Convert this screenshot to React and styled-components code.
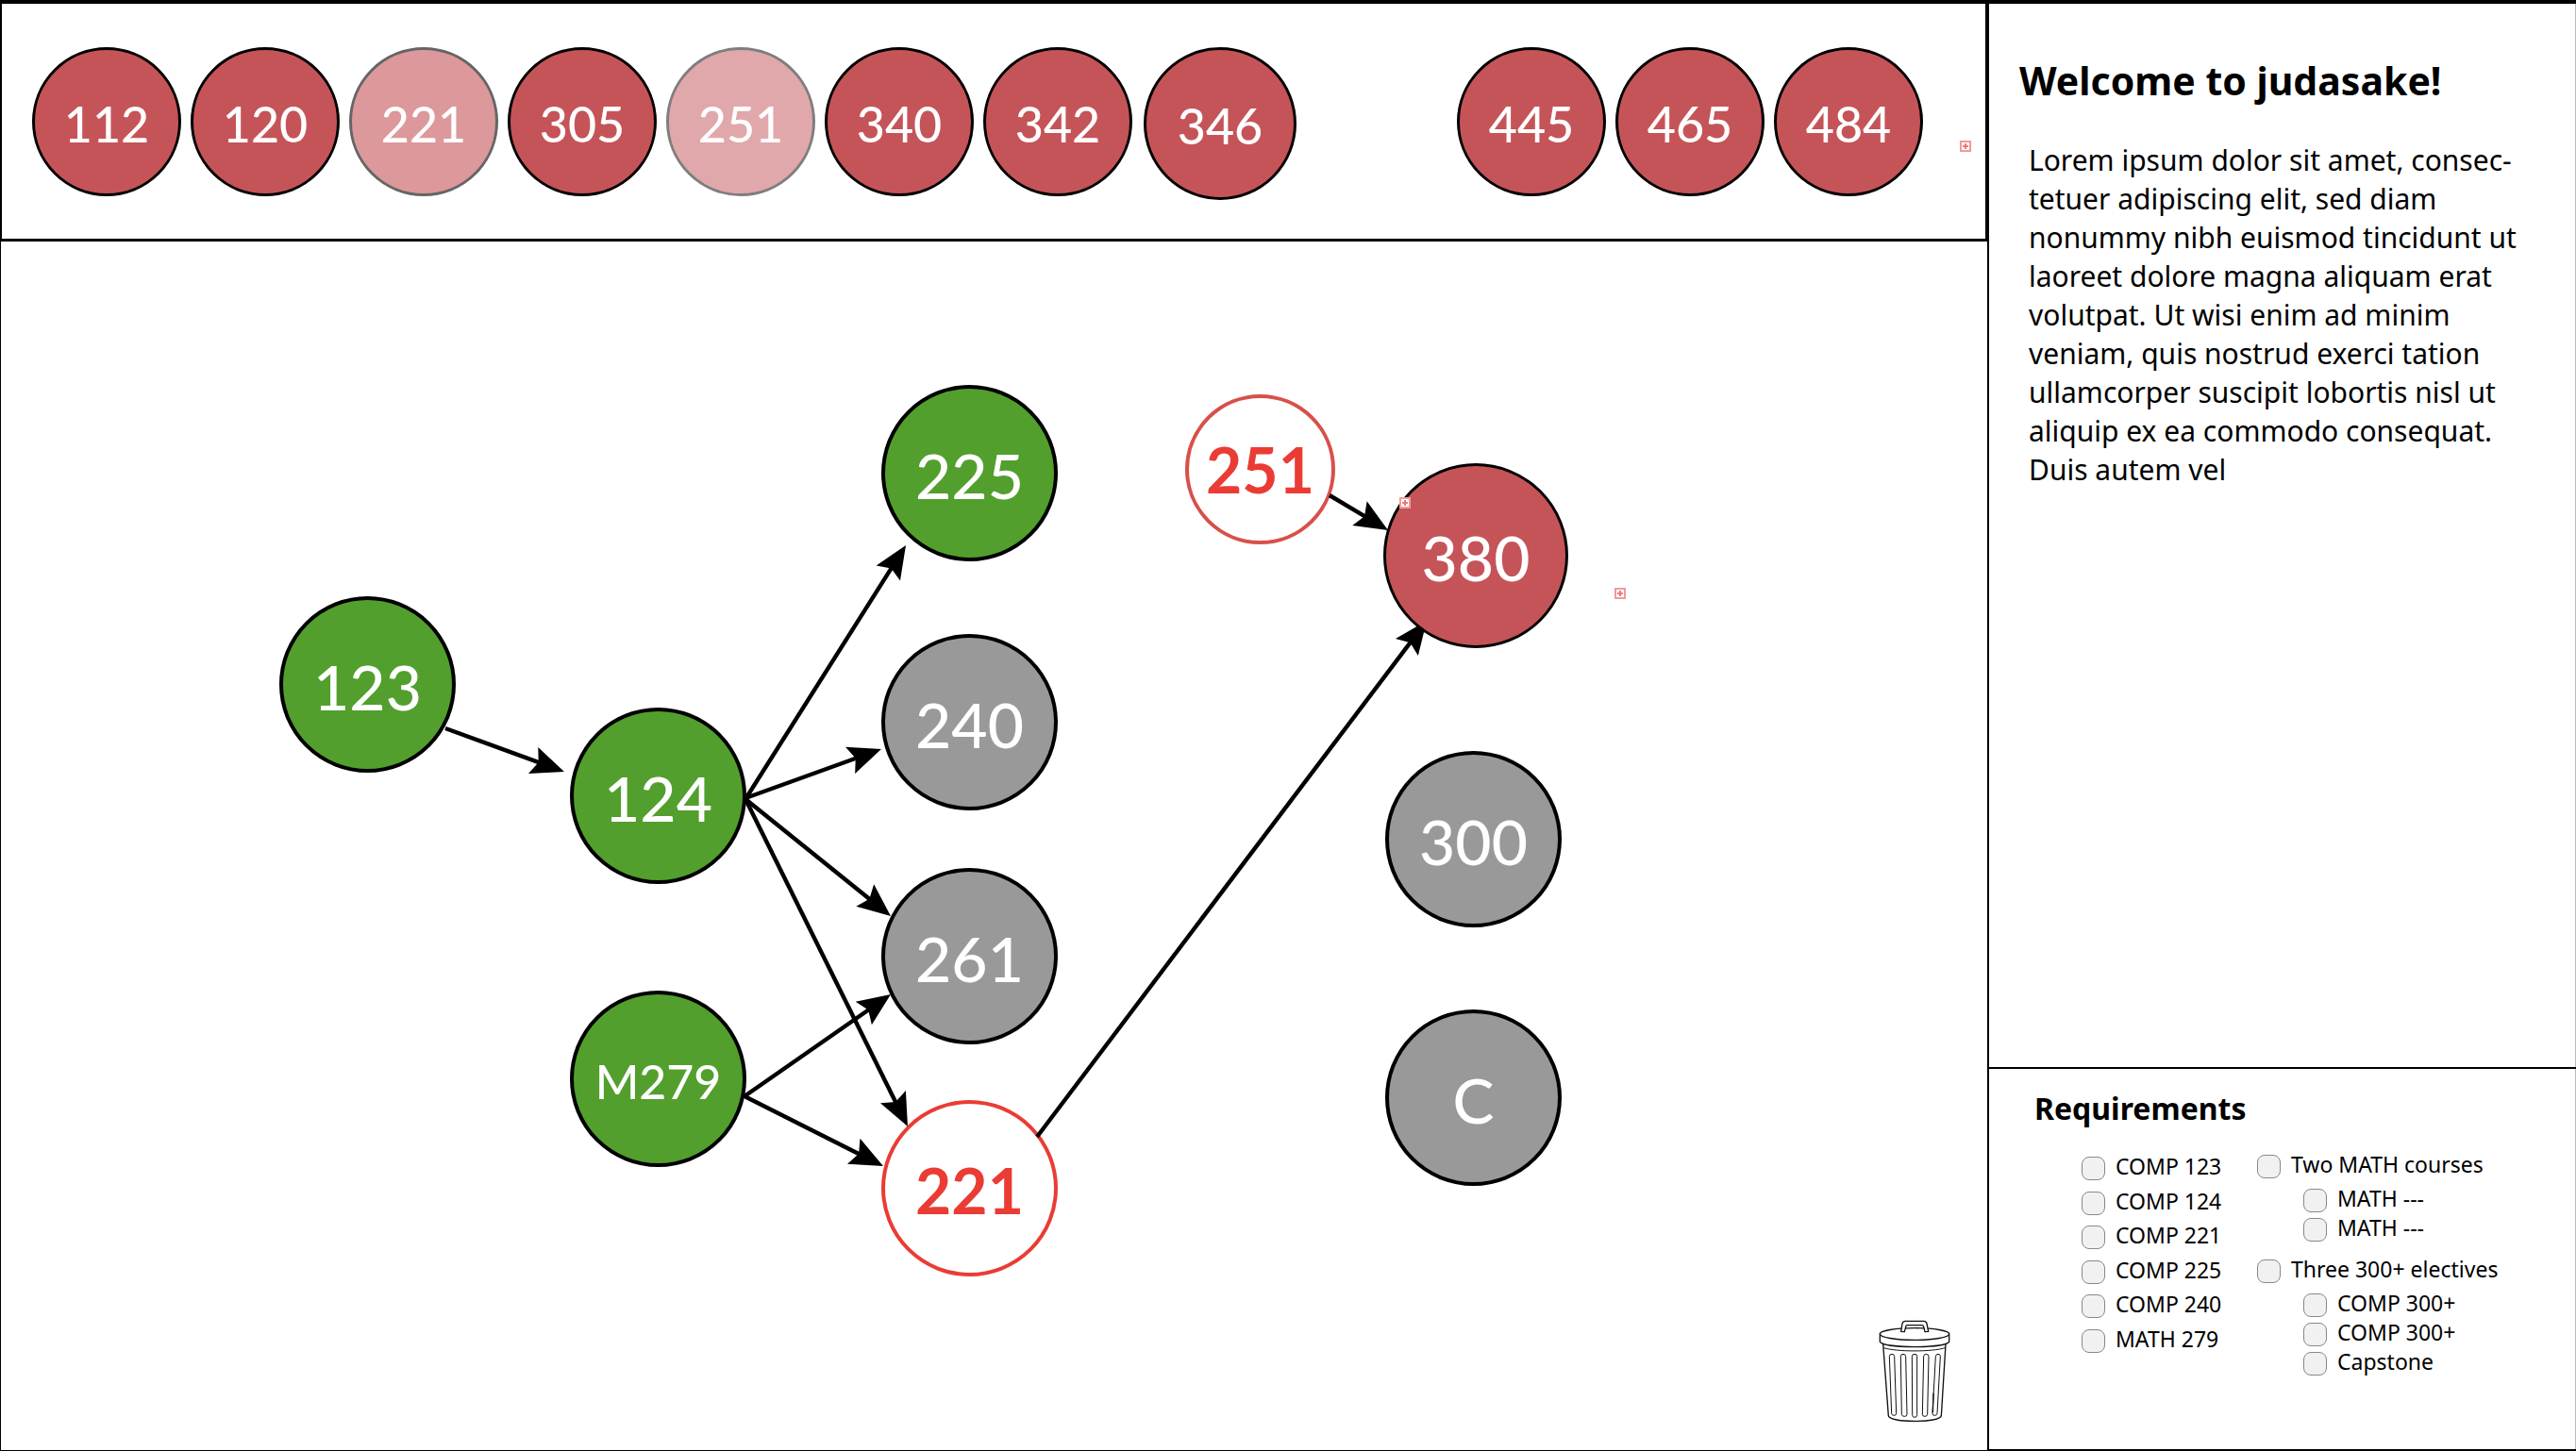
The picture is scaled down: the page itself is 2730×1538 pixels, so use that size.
import React from "react";
import styled, { createGlobalStyle } from "styled-components";

const GlobalStyle = createGlobalStyle`
  *, *::before, *::after { box-sizing: border-box; }
  body {
    margin: 0;
    background: #fff;
    color: #000;
    font-family: "Noto Sans", "Open Sans", sans-serif;
  }
  button { font: inherit; cursor: pointer; }
`;

const tones = {
  red: { fill: "#c55459", ring: "#000", text: "#fff", weight: 500 },
  green: { fill: "#529f2d", ring: "#000", text: "#fff", weight: 500 },
  grey: { fill: "#999", ring: "#000", text: "#fff", weight: 500 },
  outline: { fill: "#fff", ring: "#ea3c34", text: "#ea3c34", weight: 700 },
  outlineSoft: { fill: "#fff", ring: "#d8504a", text: "#ea3c34", weight: 700 },
};

const Page = styled.div`
  display: grid;
  grid-template-columns: minmax(0, 1fr) 624px;
  min-height: 100vh;
  border-top: 4px solid #000;
`;

const Main = styled.main`
  display: flex;
  flex-direction: column;
`;

const CourseBar = styled.header`
  display: flex;
  align-items: flex-start;
  height: 252px;
  padding: 46px 15px 0 32px;
  border: solid #000;
  border-width: 0 4px 3px 2px;
  margin-right: -2px;
`;

const ChipGroup = styled.div`
  display: flex;
  gap: 10px;
  margin-left: ${(p) => (p.$end ? "auto" : "0")};
`;

const Circle = styled.button`
  display: flex;
  align-items: center;
  justify-content: center;
  flex: none;
  width: ${(p) => p.$size}px;
  height: ${(p) => p.$size}px;
  padding: ${(p) => (p.$tone === "outlineSoft" ? 0 : 4)}px 0 0;
  border: ${(p) => p.$ring}px solid ${(p) => tones[p.$tone].ring};
  border-radius: 50%;
  background: ${(p) => tones[p.$tone].fill};
  color: ${(p) => tones[p.$tone].text};
  && {
    font-family: Lato, "Open Sans", sans-serif;
    font-weight: ${(p) => tones[p.$tone].weight};
    font-size: ${(p) => p.$text}px;
    line-height: 1;
  }
`;

const Chip = styled(Circle)`
  opacity: ${(p) => p.$opacity || 1};
  margin-left: ${(p) => (p.$size > 158 ? 2 : 0)}px;
`;

const Node = styled(Circle)`
  position: absolute;
  left: ${(p) => p.$x - Math.floor(p.$size / 2)}px;
  top: ${(p) => p.$y - Math.floor(p.$size / 2)}px;
`;

const OverflowMark = styled.span`
  position: relative;
  flex: none;
  width: 12px;
  height: 12px;
  margin: ${(p) => (p.$inBar ? "99px 0 0 39px" : "0")};
  border: 2px solid #f19a9a;
  background:
    linear-gradient(#ee7777, #ee7777) center / 6px 2px no-repeat,
    linear-gradient(#ee7777, #ee7777) center / 2px 6px no-repeat,
    #fff;
`;

const PinnedMark = styled(OverflowMark)`
  position: absolute;
  left: ${(p) => p.$x}px;
  top: ${(p) => p.$y}px;
`;

const Canvas = styled.section`
  position: relative;
  flex: 1;
  min-height: 1120px;
  border: solid #000;
  border-width: 0 0 1px 1px;
`;

const Arrows = styled.svg`
  position: absolute;
  inset: 0;
  width: 100%;
  height: 100%;
  pointer-events: none;
`;

const TrashButton = styled.button`
  position: absolute;
  right: 6px;
  bottom: 17px;
  width: 140px;
  height: 140px;
  padding: 0;
  border: 0;
  background: none;
  svg { display: block; width: 100%; height: 100%; }
`;

const Sidebar = styled.aside`
  display: flex;
  flex-direction: column;
  border: solid #000;
  border-width: 0 0 2px 2px;
  box-shadow: inset -1px 0 #bbb;
`;

const Intro = styled.section`
  flex: 1;
  padding: 53px 32px 40px;
`;

const Title = styled.h1`
  margin: 0;
  font-size: 41px;
  line-height: 56px;
  font-weight: 700;
  white-space: nowrap;
`;

const Lead = styled.p`
  margin: 36px 0 0 10px;
  font-size: 30px;
  line-height: 41px;
  white-space: pre;
`;

const Requirements = styled.section`
  height: 405px;
  padding: 21px 48px 0;
  border-top: 2px solid #000;
`;

const SubTitle = styled.h2`
  margin: 0;
  font-size: 32px;
  line-height: 42px;
  font-weight: 700;
`;

const Columns = styled.div`
  display: flex;
  align-items: flex-start;
  margin: 28px 0 0 50px;
`;

const CoreList = styled.div`
  display: flex;
  flex-direction: column;
  justify-content: space-between;
  width: 186px;
  height: 208px;
  margin-top: 2px;
`;

const GroupList = styled.div`
  display: flex;
  flex-direction: column;
  gap: 19px;
`;

const Group = styled.div`
  display: flex;
  flex-direction: column;
  gap: 11px;
`;

const Nested = styled.div`
  display: flex;
  flex-direction: column;
  gap: 6px;
  padding-left: 49px;
`;

const CheckRow = styled.label`
  display: flex;
  gap: 11px;
  height: 25px;
  font-size: 23px;
  line-height: 21px;
  white-space: nowrap;
`;

const Check = styled.input`
  appearance: none;
  flex: none;
  width: 25px;
  height: 25px;
  margin: 0;
  border: 1px solid #888;
  border-radius: 8px;
  background: #f1f1f1;
  &:checked { background: #529f2d; }
`;

const electivesLow = [
  { id: "112" },
  { id: "120" },
  { id: "221", opacity: 0.6 },
  { id: "305" },
  { id: "251", opacity: 0.5 },
  { id: "340" },
  { id: "342" },
  { id: "346", size: 162 },
];
const electivesHigh = [{ id: "445" }, { id: "465" }, { id: "484" }];

const nodes = [
  { id: "123", x: 388, y: 469, tone: "green" },
  { id: "124", x: 696, y: 587, tone: "green" },
  { id: "M279", x: 696, y: 887, tone: "green", text: 50 },
  { id: "225", x: 1026, y: 245, tone: "green" },
  { id: "240", x: 1026, y: 509, tone: "grey" },
  { id: "261", x: 1026, y: 757, tone: "grey" },
  { id: "221", x: 1026, y: 1003, tone: "outline" },
  { id: "251", x: 1334, y: 241, tone: "outlineSoft", size: 159 },
  { id: "300", x: 1560, y: 633, tone: "grey" },
  { id: "C", x: 1560, y: 907, tone: "grey" },
];

const edges = [
  [471, 516, 597, 562],
  [789, 591, 959, 322],
  [789, 590, 933, 538],
  [789, 591, 943, 715],
  [789, 591, 961, 938],
  [788, 906, 943, 798],
  [788, 906, 935, 980],
  [1098, 949, 1511, 402],
  [1408, 269, 1470, 306],
];

const core = ["COMP 123", "COMP 124", "COMP 221", "COMP 225", "COMP 240", "MATH 279"];
const groups = [
  { name: "Two MATH courses", items: ["MATH ---", "MATH ---"] },
  { name: "Three 300+ electives", items: ["COMP 300+", "COMP 300+", "Capstone"] },
];

const lead = `Lorem ipsum dolor sit amet, consec-
tetuer adipiscing elit, sed diam
nonummy nibh euismod tincidunt ut
laoreet dolore magna aliquam erat
volutpat. Ut wisi enim ad minim
veniam, quis nostrud exerci tation
ullamcorper suscipit lobortis nisl ut
aliquip ex ea commodo consequat.
Duis autem vel`;

function Arrow({ from: [x1, y1], to: [x2, y2] }) {
  const angle = Math.atan2(y2 - y1, x2 - x1);
  const degrees = (angle * 180) / Math.PI;
  return (
    <g>
      <line
        x1={x1}
        y1={y1}
        x2={x2 - 28 * Math.cos(angle)}
        y2={y2 - 28 * Math.sin(angle)}
        stroke="#000"
        strokeWidth="4.4"
      />
      <path
        d="M0 0L-35 -15L-29 0L-35 15Z"
        transform={`translate(${x2} ${y2}) rotate(${degrees})`}
      />
    </g>
  );
}

function ChipItem({ course }) {
  return (
    <Chip $size={course.size || 158} $ring={3} $tone="red" $text={52} $opacity={course.opacity}>
      {course.id}
    </Chip>
  );
}

function Requirement({ children }) {
  return (
    <CheckRow>
      <Check type="checkbox" />
      {children}
    </CheckRow>
  );
}

function TrashCan() {
  return (
    <svg viewBox="0 0 420 420" fill="#fff" stroke="#111" strokeWidth="4" strokeLinejoin="round">
      <path d="M107 134L124 362C126 385 290 385 292 362L306 134" />
      <path d="M109 146C150 159 264 159 304 146" fill="none" strokeWidth="3" />
      <path d="M97 100V127C112 148 302 148 317 127V100" />
      <ellipse cx="207" cy="102" rx="110" ry="19" />
      <path d="M164 94L168 69Q170 61 178 61H236Q244 61 246 69L251 94L240 95L236 79Q235 74 230 74H184Q180 74 179 79L175 95Z" />
      <g strokeWidth="3">
        <path d="M127 173Q127 166 135 166Q142 166 143 173L149 355Q149 361 142 361Q135 361 134 355Z" />
        <path d="M163 173Q163 166 171 166Q178 166 179 173L183 358Q183 364 175 364Q167 364 166 358Z" />
        <path d="M199 173Q199 166 207 166Q215 166 215 173V359Q215 367 207 367Q200 367 200 359Z" />
        <path d="M236 173Q237 166 244 166Q252 166 252 173L248 358Q247 364 240 364Q232 364 232 358Z" />
        <path d="M274 173Q275 166 282 166Q289 166 289 173L279 355Q278 361 271 361Q264 361 264 355Z" />
      </g>
      <path d="M267 290L265 352" />
    </svg>
  );
}

export default function App() {
  return (
    <>
      <GlobalStyle />
      <Page>
        <Main>
          <CourseBar>
            <ChipGroup>
              {electivesLow.map((c) => <ChipItem key={c.id} course={c} />)}
            </ChipGroup>
            <ChipGroup $end>
              {electivesHigh.map((c) => <ChipItem key={c.id} course={c} />)}
            </ChipGroup>
            <OverflowMark $inBar />
          </CourseBar>
          <Canvas>
            {nodes.map((n) => (
              <Node
                key={n.id}
                $x={n.x}
                $y={n.y}
                $size={n.size || 187}
                $ring={4}
                $tone={n.tone}
                $text={n.text || 66}
              >
                {n.id}
              </Node>
            ))}
            <Arrows aria-hidden="true">
              {edges.map(([x1, y1, x2, y2]) => (
                <Arrow key={`${x1}-${x2}-${y2}`} from={[x1, y1]} to={[x2, y2]} />
              ))}
            </Arrows>
            <Node $x={1563} $y={333} $size={196} $ring={3} $tone="red" $text={66}>
              380
            </Node>
            <PinnedMark $x={1482} $y={271} />
            <PinnedMark $x={1710} $y={367} />
            <TrashButton aria-label="Remove course">
              <TrashCan />
            </TrashButton>
          </Canvas>
        </Main>
        <Sidebar>
          <Intro>
            <Title>Welcome to judasake!</Title>
            <Lead>{lead}</Lead>
          </Intro>
          <Requirements>
            <SubTitle>Requirements</SubTitle>
            <Columns>
              <CoreList>
                {core.map((c) => <Requirement key={c}>{c}</Requirement>)}
              </CoreList>
              <GroupList>
                {groups.map((g) => (
                  <Group key={g.name}>
                    <Requirement>{g.name}</Requirement>
                    <Nested>
                      {g.items.map((item, i) => <Requirement key={i}>{item}</Requirement>)}
                    </Nested>
                  </Group>
                ))}
              </GroupList>
            </Columns>
          </Requirements>
        </Sidebar>
      </Page>
    </>
  );
}
